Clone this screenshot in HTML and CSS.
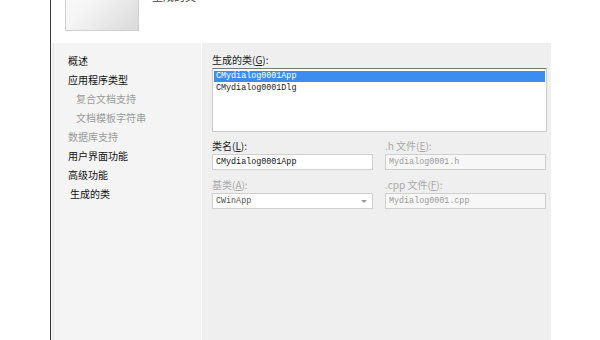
FILE: index.html
```html
<!DOCTYPE html>
<html>
<head>
<meta charset="utf-8">
<link rel="stylesheet" href="styles.css">
</head>
<body>
<div class="page">
  <div class="gutter"></div>
  <div class="dialog">
    <div class="header">
      <div class="picture"></div>
      <div class="title">生成的类</div>
    </div>
    <div class="main">
      <nav class="nav">
        <div class="item">概述</div>
        <div class="item">应用程序类型</div>
        <div class="item sub off">复合文档支持</div>
        <div class="item sub off">文档模板字符串</div>
        <div class="item off">数据库支持</div>
        <div class="item">用户界面功能</div>
        <div class="item">高级功能</div>
        <div class="item cur">生成的类</div>
      </nav>
      <section class="content">
        <div class="label">生成的类(<u>G</u>):</div>
        <div class="listbox">
          <div class="opt sel">CMydialog0001App</div>
          <div class="opt">CMydialog0001Dlg</div>
        </div>
        <div class="fields">
          <div class="field">
            <div class="label">类名(<u>L</u>):</div>
            <div class="input">CMydialog0001App</div>
          </div>
          <div class="field">
            <div class="label off">.h 文件(<u>E</u>):</div>
            <div class="input dis">Mydialog0001.h</div>
          </div>
          <div class="field">
            <div class="label off">基类(<u>A</u>):</div>
            <div class="input combo dim">CWinApp<span class="arrow"></span></div>
          </div>
          <div class="field">
            <div class="label off">.cpp 文件(<u>F</u>):</div>
            <div class="input dis">Mydialog0001.cpp</div>
          </div>
        </div>
      </section>
    </div>
  </div>
</div>
</body>
</html>
```

FILE: styles.css
```css
html, body {
  margin: 0;
  padding: 0;
  background: #ffffff;
}
body {
  width: 600px;
  height: 340px;
  overflow: hidden;
  font-family: "Noto Sans CJK SC", "DejaVu Sans", sans-serif;
  color: #1a1a1a;
}
.page {
  display: flex;
  height: 340px;
}
.gutter {
  width: 50px;
  flex: none;
}
.dialog {
  width: 500px;
  flex: none;
  border-left: 1px solid #3a3a3a;
  display: flex;
  flex-direction: column;
}
.header {
  height: 43px;
  flex: none;
  display: flex;
  align-items: flex-start;
  padding-left: 14px;
  overflow: hidden;
  background: #ffffff;
}
.picture {
  width: 72px;
  height: 70px;
  margin-top: -41px;
  border: 1px solid #cfcfcf;
  background: linear-gradient(135deg, #ffffff 0%, #f4f4f4 50%, #d9d9d9 100%);
  flex: none;
}
.title {
  margin-left: 13px;
  margin-top: -11px;
  font-size: 11px;
  line-height: 15px;
  color: #444;
}
.main {
  flex: 1;
  display: flex;
  background: #f4f4f4;
}
.nav {
  width: 133px;
  margin-left: 2px;
  border-left: 1px solid #e8e8e8;
  padding: 8px 0 0 14px;
  flex: none;
  font-size: 10px;
  line-height: 19px;
}
.item {
  color: #111;
  white-space: nowrap;
}
.item.sub {
  padding-left: 8px;
}
.item.off {
  color: #9a9a9a;
}
.item.cur {
  padding-left: 2px;
}
.content {
  flex: 1;
  border-left: 1px solid #ffffff;
  background: #efefef;
  padding: 9px 4px 0 10px;
}
.label {
  font-size: 10px;
  line-height: 16px;
  color: #222;
  white-space: nowrap;
}
.label.off {
  color: #a8a8a8;
}
.label u {
  text-decoration: underline;
}
.listbox {
  height: 60px;
  background: #ffffff;
  border: 1px solid #cccccc;
  border-top: 1px solid #7a7a7a;
  padding: 2px 1px 0 1px;
  font-family: "Liberation Mono", monospace;
  font-size: 8.4px;
}
.opt {
  height: 11px;
  line-height: 11px;
  padding-left: 2px;
  white-space: nowrap;
}
.opt.sel {
  background: #3b8ef0;
  color: #ffffff;
}
.opt + .opt {
  margin-top: 1px;
}
.fields {
  margin-top: 6px;
  display: grid;
  grid-template-columns: 161px 161px;
  column-gap: 12px;
  row-gap: 7px;
}
.input {
  position: relative;
  height: 14px;
  line-height: 14px;
  border: 1px solid #cfcfcf;
  background: #ffffff;
  padding-left: 3px;
  font-family: "Liberation Mono", monospace;
  font-size: 8.4px;
  color: #111;
  white-space: nowrap;
}
.input.dis {
  background: #f7f7f7;
  color: #9a9a9a;
}
.input.dim {
  color: #555;
}
.arrow {
  position: absolute;
  right: 5px;
  top: 6px;
  width: 0;
  height: 0;
  border-left: 3px solid transparent;
  border-right: 3px solid transparent;
  border-top: 3px solid #9a9a9a;
}
```
